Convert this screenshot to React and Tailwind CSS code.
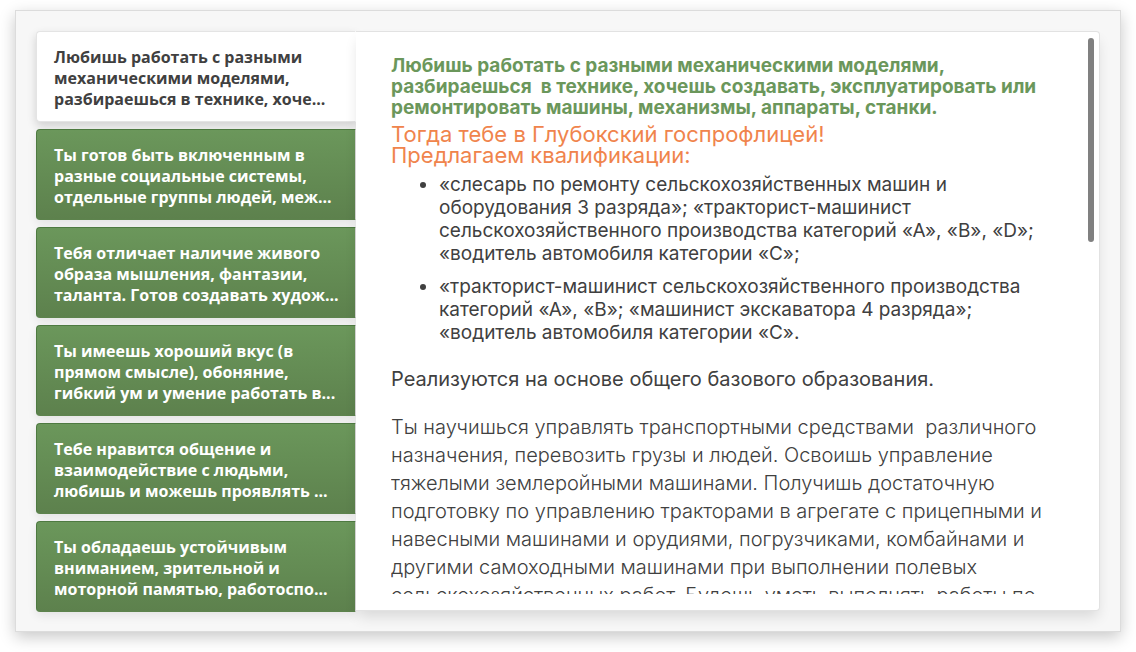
const tabs = [
  ["Любишь работать с разными", "механическими моделями,", "разбираешься в технике, хоче..."],
  ["Ты готов быть включенным в", "разные социальные системы,", "отдельные группы людей, меж..."],
  ["Тебя отличает наличие живого", "образа мышления, фантазии,", "таланта. Готов создавать худож..."],
  ["Ты имеешь хороший вкус (в", "прямом смысле), обоняние,", "гибкий ум и умение работать в..."],
  ["Тебе нравится общение и", "взаимодействие с людьми,", "любишь и можешь проявлять ..."],
  ["Ты обладаешь устойчивым", "вниманием, зрительной и", "моторной памятью, работоспо..."],
];

const qualifications = [
  [
    "«слесарь по ремонту сельскохозяйственных машин и",
    "оборудования 3 разряда»; «тракторист-машинист",
    "сельскохозяйственного производства категорий «А», «В», «D»;",
    "«водитель автомобиля категории «С»;",
  ],
  [
    "«тракторист-машинист сельскохозяйственного производства",
    "категорий «А», «В»; «машинист экскаватора 4 разряда»;",
    "«водитель автомобиля категории «С».",
  ],
];

const description = [
  "Ты научишься управлять транспортными средствами\u00a0 различного",
  "назначения, перевозить грузы и людей. Освоишь управление",
  "тяжелыми землеройными машинами. Получишь достаточную",
  "подготовку по управлению тракторами в агрегате с прицепными и",
  "навесными машинами и орудиями, погрузчиками, комбайнами и",
  "другими самоходными машинами при выполнении полевых",
  "сельскохозяйственных работ. Будешь уметь выполнять работы по",
];

function Lines({ items }) {
  return items.map((line) => (
    <span key={line} className="block whitespace-nowrap">
      {line}
    </span>
  ));
}

function Tab({ lines, active, index }) {
  const look = active
    ? "border-[#e4e4e4] border-r-white bg-white text-[#404040] shadow-[0_4px_10px_rgba(0,0,0,0.16)]"
    : "border-[#4e7a41] border-b-[#5d834d] border-r-[#dcdcdc] bg-linear-to-b from-[#6b975b] to-[#5d814d] text-white shadow-[0_4px_10px_rgba(0,0,0,0.08)]";
  return (
    <button
      type="button"
      role="tab"
      id={`tab-${index}`}
      aria-selected={active}
      aria-controls="panel"
      className={`h-[91px] rounded-l border px-[17px] pt-[4px] text-left font-['Open_Sans','Noto_Sans',sans-serif] text-[16px] leading-[21px] font-bold ${look}`}
    >
      <Lines items={lines} />
    </button>
  );
}

export default function App() {
  return (
    <main className="bg-white px-[15px] pt-[10px] pb-[20px]">
      <section className="flex border border-[#dcdcdc] bg-[#f7f7f7] px-[20px] pt-[20px] pb-[19px] shadow-[0_5px_15px_rgba(0,0,0,0.22)]">
        <div role="tablist" aria-orientation="vertical" className="flex w-[320px] shrink-0 flex-col gap-[7px]">
          {tabs.map((lines, i) => (
            <Tab key={lines[0]} lines={lines} active={i === 0} index={i} />
          ))}
        </div>
        <div
          role="tabpanel"
          id="panel"
          aria-labelledby="tab-0"
          className="relative h-[580px] min-w-0 flex-1 rounded-r border border-l-0 border-[#e2e2e2] bg-white pt-[18px] pb-[16px] pr-[30px] pl-[35px] shadow-[0_8px_14px_-2px_rgba(0,0,0,0.12)]"
        >
          <div className="h-full overflow-hidden pt-[5px] font-[Inter,sans-serif] text-[#404040]">
            <h2 className="text-[19px] leading-[21px] font-bold text-[#6b975b]">
              <Lines
                items={[
                  "Любишь работать с разными механическими моделями,",
                  "разбираешься\u00a0 в технике, хочешь создавать, эксплуатировать или",
                  "ремонтировать машины, механизмы, аппараты, станки.",
                ]}
              />
            </h2>
            <h3 className="pt-[6px] text-[22px] leading-[21px] text-[#f0844c]">
              <Lines items={["Тогда тебе в Глубокский госпрофлицей!", "Предлагаем квалификации:"]} />
            </h3>
            <ul className="flex list-disc flex-col gap-[10px] pt-[7px] pl-[48px] text-[19px] leading-[23px]">
              {qualifications.map((lines) => (
                <li key={lines[0]}>
                  <Lines items={lines} />
                </li>
              ))}
            </ul>
            <p className="pt-[24px] text-[20px] leading-[23px]">
              Реализуются на основе общего базового образования.
            </p>
            <p className="pt-[22px] text-[20px] leading-[28px] font-light">
              <Lines items={description} />
            </p>
          </div>
          <div className="absolute top-[6px] right-[5px] h-[204px] w-[6px] rounded-full bg-[#808080]" />
        </div>
      </section>
    </main>
  );
}
